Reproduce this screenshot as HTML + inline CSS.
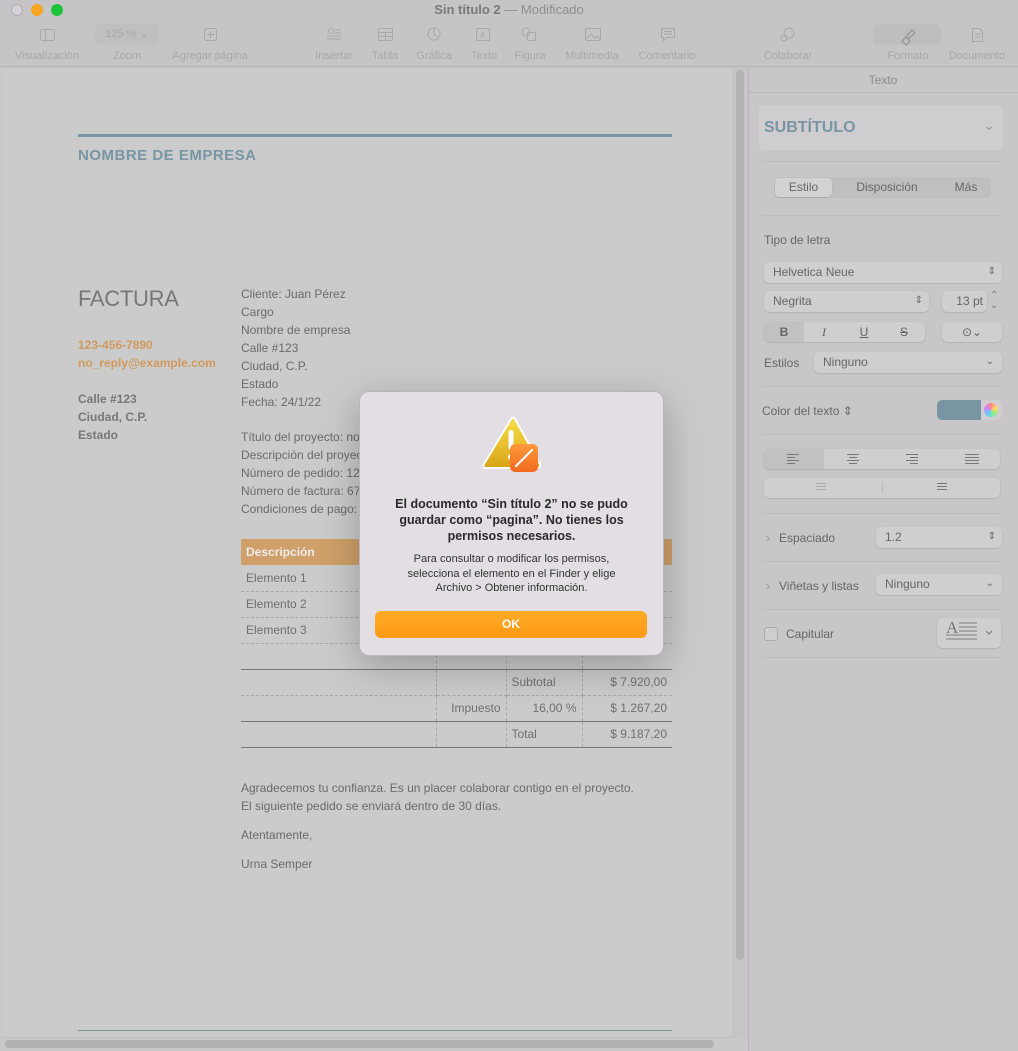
<!DOCTYPE html>
<html><head><meta charset="utf-8">
<style>
*{box-sizing:border-box;margin:0;padding:0}
body{width:1018px;height:1051px;overflow:hidden;background:#c8c6c9;font-family:"Liberation Sans",sans-serif;position:relative;color:#555}
.abs{position:absolute}
.tb{color:#a9a7aa;font-size:11px;text-align:center}
.doc{font-size:12px;color:#6a6a6a;line-height:18px}
.sb{font-size:12px;color:#666}
.ctl{position:absolute;background:#d0ced1;border-radius:5px;box-shadow:0 0.5px 1.5px rgba(0,0,0,.18);font-size:12px;color:#666;padding-left:9px;line-height:20px}
.hr{position:absolute;left:762px;width:240px;height:1px;background:#bdbbbe}
td{font-size:12px;color:#6f6f6f;height:26px;padding:0 5px;border-bottom:1px dashed #a8a8a8;border-right:1px dashed #a8a8a8}
</style></head><body>
<div class="abs" style="left:0;top:0;width:1018px;height:67px;background:#c6c4c7;border-bottom:1px solid #b6b4b7"></div>
<div class="abs" style="left:11px;top:4px;width:12px;height:12px;border-radius:50%;background:#d4d0d8;border:1px solid #b0acb2"></div>
<div class="abs" style="left:31px;top:4px;width:12px;height:12px;border-radius:50%;background:#f6a623"></div>
<div class="abs" style="left:51px;top:4px;width:12px;height:12px;border-radius:50%;background:#1ec337"></div>
<div class="abs" style="left:0;top:2px;width:1018px;text-align:center;font-size:13px;color:#8f8d90"><b style="color:#7a787b">Sin título 2</b> — Modificado</div>
<div class="abs" style="left:95px;top:24px;width:64px;height:21px;background:#c0bec1;border-radius:5px;font-size:11px;color:#a9a7aa;line-height:21px;text-align:center">125 % ⌄</div>
<div class="abs" style="left:873px;top:24px;width:68px;height:21px;background:#bfbdc0;border-radius:5px"></div>
<svg class="abs" style="left:0;top:24px" width="1018" height="22" fill="none" stroke="#a9a7aa" stroke-width="1">
<rect x="40.5" y="5.5" width="14" height="11" rx="2"/><line x1="45.5" y1="5.5" x2="45.5" y2="16.5"/>
<rect x="204.5" y="4.5" width="12" height="12" rx="2"/><path d="M210.5 7v7M207 10.5h7"/>
<circle cx="331" cy="7" r="2.5"/><path d="M335 6h6M335 9h6M327 12h14M327 15h14"/>
<rect x="378.5" y="4.5" width="14" height="12" rx="1"/><path d="M378.5 8.5h14M378.5 12.5h14M385.5 8.5v8"/>
<circle cx="434" cy="10" r="6"/><path d="M434 4v6l4 4"/>
<rect x="476.5" y="4.5" width="13" height="12" rx="1"/><text x="480" y="14" font-size="8" fill="#a9a7aa" stroke="none">A</text>
<circle cx="526" cy="8" r="4"/><rect x="527.5" y="8.5" width="8" height="8" rx="1"/>
<rect x="585.5" y="4.5" width="15" height="12" rx="1"/><path d="M586 15l5-5 4 4 2-2 4 4"/>
<path d="M661.5 4.5h13v9h-8l-3 3v-3h-2z"/><path d="M664 7.5h8M664 10h8"/>
<circle cx="789" cy="9" r="5"/><circle cx="784" cy="14" r="3"/>
<path d="M902 17l4-4 4 4-4 4zM906 13l6-7 3 3-7 6" stroke="#8e8c8f"/>
<path d="M972.5 4.5h7l3 3v10h-10z M975 10h5M975 13h5"/>
</svg>
<div class="tb abs" style="left:7px;top:50px;width:80px">Visualización</div>
<div class="tb abs" style="left:100px;top:50px;width:54px">Zoom</div>
<div class="tb abs" style="left:165px;top:50px;width:90px">Agregar página</div>
<div class="tb abs" style="left:308px;top:50px;width:52px">Insertar</div>
<div class="tb abs" style="left:366px;top:50px;width:38px">Tabla</div>
<div class="tb abs" style="left:410px;top:50px;width:48px">Gráfica</div>
<div class="tb abs" style="left:464px;top:50px;width:40px">Texto</div>
<div class="tb abs" style="left:508px;top:50px;width:44px">Figura</div>
<div class="tb abs" style="left:558px;top:50px;width:68px">Multimedia</div>
<div class="tb abs" style="left:630px;top:50px;width:74px">Comentario</div>
<div class="tb abs" style="left:754px;top:50px;width:68px">Colaborar</div>
<div class="tb abs" style="left:876px;top:50px;width:64px">Formato</div>
<div class="tb abs" style="left:942px;top:50px;width:70px">Documento</div>

<div class="abs" style="left:0;top:68px;width:748px;height:983px;background:#c9c9c9"></div>
<div class="abs" style="left:3px;top:68px;width:730px;height:970px;background:#cbcbcb;border-right:1px solid #c0c0c0;border-bottom:1px solid #c0c0c0"></div>
<div class="abs" style="left:734px;top:68px;width:14px;height:970px;background:#c6c6c6;border-left:1px solid #bdbdbd"></div>
<div class="abs" style="left:736px;top:70px;width:8px;height:890px;background:#b2b2b2;border-radius:4px"></div>
<div class="abs" style="left:5px;top:1040px;width:709px;height:8px;background:#b0b0b0;border-radius:4px"></div>

<div class="abs" style="left:78px;top:134px;width:594px;height:3px;background:#7895a4"></div>
<div class="abs" style="left:78px;top:147px;font-size:15px;font-weight:bold;color:#7895a4;letter-spacing:.5px">NOMBRE DE EMPRESA</div>
<div class="abs" style="left:78px;top:286px;font-size:22px;color:#777;letter-spacing:-.3px">FACTURA</div>
<div class="abs doc" style="left:78px;top:336px;color:#d09a5e;font-weight:bold">123-456-7890<br>no_reply@example.com</div>
<div class="abs doc" style="left:78px;top:390px;font-weight:bold;color:#777">Calle #123<br>Ciudad, C.P.<br>Estado</div>
<div class="abs doc" style="left:241px;top:285px">Cliente: Juan Pérez<br>Cargo<br>Nombre de empresa<br>Calle #123<br>Ciudad, C.P.<br>Estado<br>Fecha: 24/1/22</div>
<div class="abs doc" style="left:241px;top:428px">Título del proyecto: no<br>Descripción del proyecto<br>Número de pedido: 12<br>Número de factura: 67<br>Condiciones de pago:</div>

<table class="abs" style="left:241px;top:539px;width:431px;border-collapse:collapse">
<tr><td style="background:#d0a06a;color:#ececec;font-weight:bold;height:24px;border:none;width:195px">Descripción</td><td style="background:#d0a06a;border:none;width:70px"></td><td style="background:#d0a06a;border:none;width:76px"></td><td style="background:#d0a06a;border:none"></td></tr>
<tr><td>Elemento 1</td><td></td><td></td><td style="border-right:none"></td></tr>
<tr><td>Elemento 2</td><td></td><td></td><td style="border-right:none"></td></tr>
<tr><td>Elemento 3</td><td></td><td></td><td style="border-right:none"></td></tr>
<tr><td style="border-bottom:1px solid #777"></td><td style="border-bottom:1px solid #777"></td><td style="border-bottom:1px solid #777"></td><td style="border-bottom:1px solid #777;border-right:none"></td></tr>
<tr><td></td><td></td><td>Subtotal</td><td style="text-align:right;border-right:none">$ 7.920,00</td></tr>
<tr><td style="border-bottom:1px solid #777"></td><td style="border-bottom:1px solid #777;text-align:right">Impuesto</td><td style="border-bottom:1px solid #777;text-align:right">16,00 %</td><td style="border-bottom:1px solid #777;text-align:right;border-right:none">$ 1.267,20</td></tr>
<tr><td style="border-bottom:1px solid #777"></td><td style="border-bottom:1px solid #777"></td><td style="border-bottom:1px solid #777">Total</td><td style="border-bottom:1px solid #777;text-align:right;border-right:none">$ 9.187,20</td></tr>
</table>

<div class="abs doc" style="left:241px;top:779px">Agradecemos tu confianza. Es un placer colaborar contigo en el proyecto.<br>El siguiente pedido se enviará dentro de 30 días.</div>
<div class="abs doc" style="left:241px;top:826px">Atentamente,</div>
<div class="abs doc" style="left:241px;top:855px">Urna Semper</div>
<div class="abs" style="left:78px;top:1030px;width:594px;height:1px;background:#7c8c94"></div>

<div class="abs" style="left:748px;top:68px;width:270px;height:983px;background:#c8c6c9;border-left:1px solid #b8b6b9"></div>
<div class="abs" style="left:748px;top:73px;width:270px;text-align:center;font-size:12px;color:#8e8c8f">Texto</div>
<div class="abs" style="left:748px;top:92px;width:270px;height:1px;background:#bab8bb"></div>
<div class="abs" style="left:759px;top:105px;width:244px;height:45px;background:#cfcdd0;border-radius:4px"></div>
<div class="abs" style="left:764px;top:119px;font-size:16px;font-weight:bold;color:#7895a4">SUBTÍTULO</div>
<div class="abs" style="left:983px;top:117px;font-size:14px;color:#999">⌄</div>
<div class="hr" style="top:161px"></div>
<div class="abs" style="left:774px;top:177px;width:217px;height:21px;background:#c0bec1;border-radius:5px"></div>
<div class="abs" style="left:775px;top:178px;width:57px;height:19px;background:#d3d1d4;border-radius:4px;box-shadow:0 .5px 1px rgba(0,0,0,.2)"></div>
<div class="abs sb" style="left:775px;top:180px;width:57px;text-align:center">Estilo</div>
<div class="abs sb" style="left:845px;top:180px;width:84px;text-align:center">Disposición</div>
<div class="abs sb" style="left:942px;top:180px;width:48px;text-align:center">Más</div>
<div class="hr" style="top:215px"></div>
<div class="abs sb" style="left:764px;top:233px">Tipo de letra</div>
<div class="ctl" style="left:764px;top:262px;width:238px;height:21px">Helvetica Neue<span style="position:absolute;right:6px;font-size:10px">⇕</span></div>
<div class="ctl" style="left:764px;top:291px;width:165px;height:21px">Negrita<span style="position:absolute;right:6px;font-size:10px">⇕</span></div>
<div class="ctl" style="left:942px;top:291px;width:45px;height:21px;text-align:right;padding-right:4px">13 pt</div>
<div class="abs" style="left:990px;top:291px;font-size:10px;color:#777;line-height:10px">⌃<br>⌄</div>
<div class="ctl" style="left:764px;top:322px;width:161px;height:20px;padding:0"></div>
<div class="abs" style="left:764px;top:322px;width:40px;height:20px;background:#c2c0c3;border-radius:5px 0 0 5px"></div>
<div class="abs sb" style="left:764px;top:325px;width:40px;text-align:center;font-weight:bold">B</div>
<div class="abs sb" style="left:804px;top:325px;width:40px;text-align:center;font-style:italic;font-family:'Liberation Serif'">I</div>
<div class="abs sb" style="left:844px;top:325px;width:40px;text-align:center;text-decoration:underline">U</div>
<div class="abs sb" style="left:884px;top:325px;width:40px;text-align:center;text-decoration:line-through">S</div>
<div class="ctl" style="left:942px;top:322px;width:60px;height:20px;text-align:center;padding:0">⊙⌄</div>
<div class="abs sb" style="left:764px;top:356px">Estilos</div>
<div class="ctl" style="left:814px;top:352px;width:188px;height:21px">Ninguno<span style="position:absolute;right:8px;font-size:10px">⌄</span></div>
<div class="hr" style="top:386px"></div>
<div class="abs sb" style="left:762px;top:404px">Color del texto ⇕</div>
<div class="abs" style="left:937px;top:400px;width:44px;height:20px;background:#7895a4;border-radius:5px 0 0 5px"></div>
<div class="abs" style="left:981px;top:400px;width:21px;height:20px;background:#d0ced1;border-radius:0 5px 5px 0"></div>
<div class="abs" style="left:984px;top:403px;width:14px;height:14px;border-radius:50%;background:conic-gradient(#f88,#fd6,#8e8,#6cf,#c8f,#f88)"></div>
<div class="hr" style="top:434px"></div>
<div class="ctl" style="left:764px;top:449px;width:236px;height:20px;padding:0"></div>
<div class="abs" style="left:764px;top:449px;width:60px;height:20px;background:#c2c0c3;border-radius:5px 0 0 5px"></div>
<div class="ctl" style="left:764px;top:478px;width:236px;height:20px;padding:0"></div>
<svg class="abs" style="left:764px;top:449px" width="240" height="50" stroke="#777" stroke-width="1">
<path d="M23 5.5h12M23 8.5h8M23 11.5h12M23 14.5h8"/>
<path d="M83 5.5h12M85 8.5h8M83 11.5h12M85 14.5h8"/>
<path d="M142 5.5h12M146 8.5h8M142 11.5h12M146 14.5h8"/>
<path d="M201 5.5h14M201 8.5h14M201 11.5h14M201 14.5h14"/>
<path d="M52 34.5h10M52 37.5h10M52 40.5h10" stroke="#aaa"/>
<path d="M173 34.5h10M173 37.5h10M173 40.5h10"/>
<line x1="118.5" y1="33" x2="118.5" y2="44" stroke="#bbb"/>
</svg>
<div class="hr" style="top:513px"></div>
<div class="abs sb" style="left:766px;top:531px;color:#999">›</div>
<div class="abs sb" style="left:779px;top:531px">Espaciado</div>
<div class="ctl" style="left:876px;top:527px;width:126px;height:21px">1.2<span style="position:absolute;right:6px;font-size:10px">⇕</span></div>
<div class="hr" style="top:561px"></div>
<div class="abs sb" style="left:766px;top:579px;color:#999">›</div>
<div class="abs sb" style="left:779px;top:579px">Viñetas y listas</div>
<div class="ctl" style="left:876px;top:574px;width:126px;height:21px">Ninguno<span style="position:absolute;right:8px;font-size:10px">⌄</span></div>
<div class="hr" style="top:609px"></div>
<div class="abs" style="left:764px;top:627px;width:14px;height:14px;border:1px solid #aaa;border-radius:3px;background:#cfcdd0"></div>
<div class="abs sb" style="left:786px;top:627px">Capitular</div>
<div class="ctl" style="left:937px;top:618px;width:64px;height:30px;padding:0"></div>
<div class="abs" style="left:946px;top:618px;font-family:'Liberation Serif';font-size:17px;color:#777">A</div>
<svg class="abs" style="left:944px;top:621px" width="50" height="24" stroke="#999" stroke-width="1.5"><path d="M15 2h18M15 6h18M15 10h18M2 14h31M2 18h31"/><path d="M42 10l3 3 3-3" stroke="#777" fill="none" stroke-width="1"/></svg>
<div class="hr" style="top:657px"></div>

<div class="abs" style="left:359px;top:391px;width:305px;height:265px;background:#e2dee4;border-radius:10px;border:1px solid #b9b5bb;box-shadow:0 10px 40px rgba(0,0,0,.25)"></div>
<svg class="abs" style="left:480px;top:414px" width="64" height="62">
<defs><linearGradient id="g" x1="0" y1="0" x2="0" y2="1"><stop offset="0" stop-color="#f7de4a"/><stop offset="1" stop-color="#d9a417"/></linearGradient>
<linearGradient id="o" x1="0" y1="0" x2="0" y2="1"><stop offset="0" stop-color="#ff9a3c"/><stop offset="1" stop-color="#f06a20"/></linearGradient></defs>
<path d="M31 5 Q33 2 35 5 L60 50 Q61 54 57 54 L6 54 Q2 54 4 50 Z" fill="url(#g)" stroke="#fff" stroke-width="2"/>
<rect x="28.5" y="16" width="5" height="20" rx="2.5" fill="#fff"/>
<circle cx="31" cy="43" r="3" fill="#fff"/>
<rect x="30" y="30" width="28" height="28" rx="5" fill="url(#o)"/>
<path d="M36 52 L52 36" stroke="#fff" stroke-width="2" stroke-linecap="round"/>
</svg>
<div class="abs" style="left:375px;top:496px;width:273px;text-align:center;font-size:12.5px;font-weight:bold;color:#2a2a2a;line-height:16px">El documento “Sin título 2” no se pudo guardar como “pagina”. No tienes los permisos necesarios.</div>
<div class="abs" style="left:386px;top:552px;width:251px;text-align:center;font-size:11px;color:#333;line-height:14.5px">Para consultar o modificar los permisos,<br>selecciona el elemento en el Finder y elige<br>Archivo &gt; Obtener información.</div>
<div class="abs" style="left:375px;top:611px;width:272px;height:27px;border-radius:6px;background:linear-gradient(#ffab2a,#ff9a10);color:#fff;font-size:12px;font-weight:bold;text-align:center;line-height:27px">OK</div>
</body></html>
